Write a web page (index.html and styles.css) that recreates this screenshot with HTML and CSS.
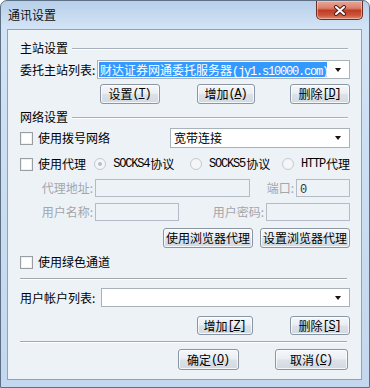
FILE: index.html
```html
<!DOCTYPE html>
<html lang="zh-CN">
<head>
    <meta charset="UTF-8">
    <title>通讯设置</title>
    <link rel="stylesheet" href="styles.css">
</head>
<body>

<div class="window">
    <div class="titlebar">
        <span class="title">通讯设置</span>
        <div class="close">
            <svg width="14" height="11" viewBox="0 0 14 11">
                <path d="M3 2 L11 9 M11 2 L3 9" stroke="#4a1f1a" stroke-width="4" stroke-linecap="round"/>
                <path d="M3 2 L11 9 M11 2 L3 9" stroke="#fff" stroke-width="2" stroke-linecap="round"/>
            </svg>
        </div>
    </div>

    <div class="client">
        <!-- 主站设置 -->
        <div class="grp r1"><span>主站设置</span><i class="rule"></i></div>
        <div class="row r2">
            <span class="lbl w81">委托主站列表:</span>
            <div class="combo grow">
                <div class="combo-text"><span class="sel">财达证券网通委托服务器<span class="en">(jy1.s10000.com)</span></span></div>
                <b class="arrow"></b>
            </div>
        </div>
        <div class="row r3">
            <button class="btn b-set">设置<span class="en">(<u>T</u>)</span></button>
            <button class="btn b-add">增加<span class="en">(<u>A</u>)</span></button>
            <button class="btn b-del">删除<span class="en">[<u>D</u>]</span></button>
        </div>

        <!-- 网络设置 -->
        <div class="grp r4"><span>网络设置</span><i class="rule"></i></div>
        <div class="row r5">
            <span class="chk"></span>
            <span class="chk-text dial">使用拨号网络</span>
            <div class="combo dial-combo">
                <div class="combo-text">宽带连接</div>
                <b class="arrow"></b>
            </div>
        </div>
        <div class="row r6">
            <span class="chk"></span>
            <span class="chk-text proxy">使用代理</span>
            <span class="opt o1"><i class="radio on"></i><span class="en">SOCKS4</span>协议</span>
            <span class="opt o2"><i class="radio"></i><span class="en">SOCKS5</span>协议</span>
            <span class="opt o3"><i class="radio"></i><span class="en">HTTP</span>代理</span>
        </div>
        <div class="row r7">
            <span class="dlbl w75">代理地址:</span>
            <div class="field w155"></div>
            <span class="dlbl w46">端口:</span>
            <div class="field w54"><span class="en">0</span></div>
        </div>
        <div class="row r8">
            <span class="dlbl w75">用户名称:</span>
            <div class="field w84"></div>
            <span class="dlbl w87">用户密码:</span>
            <div class="field w84"></div>
        </div>
        <div class="row r9">
            <button class="btn b-use">使用浏览器代理</button>
            <button class="btn b-cfg">设置浏览器代理</button>
        </div>
        <div class="row r10">
            <span class="chk"></span>
            <span class="chk-text">使用绿色通道</span>
        </div>

        <div class="sep s1"></div>

        <div class="row r12">
            <span class="lbl w81">用户帐户列表:</span>
            <div class="combo grow">
                <div class="combo-text"></div>
                <b class="arrow"></b>
            </div>
        </div>
        <div class="row r13">
            <button class="btn b-add2">增加<span class="en">[<u>Z</u>]</span></button>
            <button class="btn b-del2">删除<span class="en">[<u>S</u>]</span></button>
        </div>

        <div class="sep s2"></div>

        <div class="row r15">
            <button class="btn b-ok">确定<span class="en">(<u>O</u>)</span></button>
            <button class="btn b-cancel">取消<span class="en">(<u>C</u>)</span></button>
        </div>
    </div>
</div>

</body>
</html>
```

FILE: styles.css
```css
* {
    box-sizing: border-box;
}
body {
    margin: 0;
    font-family: "Noto Sans CJK SC", "Liberation Sans", sans-serif;
    font-size: 12px;
    line-height: 16px;
    color: #000;
    background: #fff;
}
/* half-width latin, like the bitmap ui font */
.en {
    font-family: "Liberation Mono", "DejaVu Sans Mono", monospace;
    font-size: 12px;
    letter-spacing: -1.2px;
    padding-right: 1px;
}
.window {
    width: 370px;
    height: 388px;
    border: 1px solid #5d6f84;
    border-radius: 7px 7px 0 0;
    background: linear-gradient(#b7cfe9, #d2e3f5 26px, #cde0f3 120px, #c3d8ee);
    display: flex;
    flex-direction: column;
}
.titlebar {
    height: 28px;
    display: flex;
    align-items: flex-start;
    padding-left: 7px;
}
.title {
    margin-top: 6px;
    color: #111;
}
.close {
    margin-left: auto;
    margin-right: 6px;
    width: 47px;
    height: 19px;
    border: 1px solid #6a2e27;
    border-top: none;
    border-radius: 0 0 5px 5px;
    background: linear-gradient(#eaa796, #d8806b 40%, #c23c24 52%, #c9533a 78%, #dc8a73);
    box-shadow: inset 0 0 0 1px rgba(255, 220, 210, 0.5);
    display: flex;
    align-items: center;
    justify-content: center;
}
.close svg {
    display: block;
}
.client {
    margin: 0 7px 7px 6px;
    flex: 1;
    border: 1px solid #8ea3b9;
    background: #edf2f7;
    padding: 10px 11px 0 12px;
    display: flex;
    flex-direction: column;
}

/* rows */
.row {
    display: flex;
    align-items: center;
}
.grp {
    display: flex;
    align-items: center;
    height: 16px;
}
.grp .rule {
    flex: 1;
    height: 2px;
    border-top: 1px solid #a7b1bb;
    border-bottom: 1px solid #fff;
    margin: 1px 2px 0 4px;
}
.r2 { margin-top: 4px; height: 19px; }
.r3 { margin-top: 5px; height: 20px; }
.r4 { margin-top: 5px; }
.r5 { margin-top: 3px; height: 20px; }
.r6 { margin-top: 8px; height: 16px; }
.r7 { margin-top: 7px; height: 18px; }
.r8 { margin-top: 6px; height: 18px; }
.r9 { margin-top: 7px; height: 20px; }
.r10 { margin-top: 6px; height: 16px; }
.r12 { margin-top: 8px; height: 19px; }
.r13 { margin-top: 9px; height: 19px; }
.r15 { margin-top: 6px; height: 21px; }

.sep {
    height: 2px;
    border-top: 1px solid #a0a8b0;
    border-bottom: 1px solid #fff;
    margin-right: 3px;
}
.s1 { margin-top: 8px; }
.s2 { margin-top: 6px; }

/* labels */
.lbl {
    white-space: nowrap;
}
.w81 { width: 81px; }
.dlbl {
    color: #a3a6aa;
    text-align: right;
    padding-right: 2px;
    white-space: nowrap;
}
.w75 { width: 75px; }
.w46 { width: 46px; }
.w87 { width: 87px; }

/* combo boxes */
.combo {
    height: 100%;
    background: #fff;
    border: 1px solid #a9b1ba;
    display: flex;
    align-items: center;
    padding: 1px 0 1px 1px;
}
.grow { flex: 1; }
.combo-text {
    flex: 1;
    height: 100%;
    overflow: hidden;
    white-space: nowrap;
    padding-left: 2px;
    display: flex;
    align-items: center;
}
.sel {
    background: #3399ff;
    color: #fff;
    display: block;
    height: 100%;
    width: 100%;
    line-height: 15px;
    overflow: hidden;
    margin-left: -2px;
    padding-left: 1px;
}
.arrow {
    width: 20px;
    height: 100%;
    position: relative;
}
.arrow::after {
    content: "";
    position: absolute;
    left: 6px;
    top: 50%;
    margin-top: -2px;
    border: 3.5px solid transparent;
    border-top: 4px solid #111;
    border-bottom: none;
}
.dial-combo {
    width: 180px;
    margin-left: auto;
}

/* buttons */
.btn {
    font: inherit;
    color: #000;
    height: 100%;
    padding: 0;
    border: 1px solid #8a96a3;
    border-radius: 3px;
    background: linear-gradient(#f5f7fa, #eaeef2 48%, #dce2e8 52%, #d3d9e0);
    box-shadow: inset 0 0 0 1px rgba(255, 255, 255, 0.75);
    display: flex;
    align-items: center;
    justify-content: center;
    white-space: nowrap;
}
.b-set { width: 60px; margin-left: 80px; }
.b-add { width: 58px; margin-left: 37px; }
.b-del { width: 60px; margin-left: auto; }
.b-use { width: 90px; margin-left: 143px; }
.b-cfg { width: 90px; margin-left: auto; }
.b-add2 { width: 56px; margin-left: 177px; }
.b-del2 { width: 60px; margin-left: auto; }
.b-ok { width: 61px; margin-left: 158px; }
.b-cancel { width: 73px; margin-left: auto; margin-right: 2px; }

/* checkboxes and radios */
.chk {
    width: 13px;
    height: 13px;
    border: 1px solid #9a9ea3;
    background: #fff;
    box-shadow: inset 0 0 0 1px #eef0f2;
    flex-shrink: 0;
}
.chk-text {
    margin-left: 5px;
    white-space: nowrap;
}
.chk-text.proxy { width: 57px; }
.opt {
    display: flex;
    align-items: center;
    white-space: nowrap;
}
.o1 { width: 97px; }
.o2 { width: 93px; }
.radio {
    width: 12px;
    height: 12px;
    border-radius: 50%;
    border: 1px solid #c4cad0;
    background: #f4f6f8;
    margin-right: 7px;
    display: flex;
    align-items: center;
    justify-content: center;
    flex-shrink: 0;
}
.radio.on::after {
    content: "";
    width: 4px;
    height: 4px;
    border-radius: 50%;
    background: #b9bfc5;
}

/* disabled fields */
.field {
    height: 100%;
    border: 1px solid #b3bcc6;
    background: #edf2f7;
    padding-left: 3px;
    line-height: 16px;
    color: #333;
}
.w155 { width: 155px; }
.w54 { width: 54px; }
.w84 { width: 84px; }
```
